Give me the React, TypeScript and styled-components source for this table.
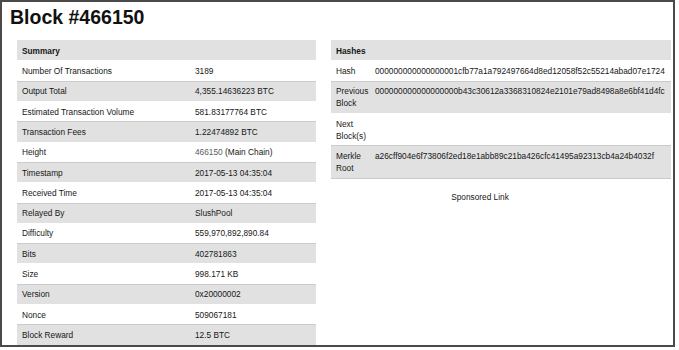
import React from 'react'
import styled, { createGlobalStyle } from 'styled-components'

const GlobalStyle = createGlobalStyle`
  body {
    margin: 0;
    background: #fff;
    font-family: "Liberation Sans", Arial, sans-serif;
    color: #161616;
  }
`

interface Pair {
  label: string
  value: React.ReactNode
}

const summary: Pair[] = [
  { label: 'Number Of Transactions', value: '3189' },
  { label: 'Output Total', value: '4,355.14636223 BTC' },
  { label: 'Estimated Transaction Volume', value: '581.83177764 BTC' },
  { label: 'Transaction Fees', value: '1.22474892 BTC' },
  { label: 'Height', value: null },
  { label: 'Timestamp', value: '2017-05-13 04:35:04' },
  { label: 'Received Time', value: '2017-05-13 04:35:04' },
  { label: 'Relayed By', value: 'SlushPool' },
  { label: 'Difficulty', value: '559,970,892,890.84' },
  { label: 'Bits', value: '402781863' },
  { label: 'Size', value: '998.171 KB' },
  { label: 'Version', value: '0x20000002' },
  { label: 'Nonce', value: '509067181' },
  { label: 'Block Reward', value: '12.5 BTC' },
]

const hashes: Pair[] = [
  { label: 'Hash', value: '000000000000000001cfb77a1a792497664d8ed12058f52c55214abad07e1724' },
  { label: 'Previous Block', value: '000000000000000000b43c30612a3368310824e2101e79ad8498a8e6bf41d4fc' },
  { label: 'Next Block(s)', value: '' },
  { label: 'Merkle Root', value: 'a26cff904e6f73806f2ed18e1abb89c21ba426cfc41495a92313cb4a24b4032f' },
]

const Frame = styled.div`
  width: 675px;
  height: 347px;
  box-sizing: border-box;
  border: 2px solid #4a4a4a;
  overflow: hidden;
  padding-top: 4px;
`
const Title = styled.h1`
  margin: 0 0 12px 8px;
  font-size: 19.5px;
  line-height: 22px;
  font-weight: 700;
  color: #111;
`
const Columns = styled.div`
  display: grid;
  grid-template-columns: 299px 340px;
  column-gap: 15px;
  padding-left: 15px;
  align-items: start;
`
const Table = styled.div`
  display: flex;
  flex-direction: column;
`
const Row = styled.div<{ $shade: boolean }>`
  display: flex;
  padding: 3.67px 0;
  line-height: 12px;
  font-size: 8.3px;
  background: ${p => (p.$shade ? '#e1e1e1' : '#fff')};
  border-top: 1px solid ${p => (p.$shade ? '#cbcbcb' : 'transparent')};
  border-bottom: 1px solid ${p => (p.$shade ? '#cbcbcb' : 'transparent')};
  margin-bottom: -1px;
  &:first-child {
    border-top: none;
    padding-top: 4.67px;
  }
`
const HeaderCell = styled.div`
  padding-left: 5px;
  font-weight: 700;
`
const Label = styled.div<{ $width: number }>`
  flex: none;
  width: ${p => p.$width}px;
  box-sizing: border-box;
  padding-left: 5px;
`
const Value = styled.div<{ $nowrap?: boolean }>`
  flex: 1;
  white-space: ${p => (p.$nowrap ? 'nowrap' : 'normal')};
`
const ChainLink = styled.span`
  color: #5c5c5c;
`
const Sponsor = styled.div`
  padding: 13px 42px 0 0;
  text-align: center;
  font-size: 8.3px;
  line-height: 12px;
`

export default function App() {
  return (
    <>
      <GlobalStyle />
      <Frame>
        <Title>Block #466150</Title>
        <Columns>
          <Table>
            <Row $shade>
              <HeaderCell>Summary</HeaderCell>
            </Row>
            {summary.map((row, i) => (
              <Row key={row.label} $shade={i % 2 === 1}>
                <Label $width={178}>{row.label}</Label>
                <Value>
                  {row.label === 'Height' ? (
                    <>
                      <ChainLink>466150</ChainLink> (Main Chain)
                    </>
                  ) : (
                    row.value
                  )}
                </Value>
              </Row>
            ))}
          </Table>
          <div>
            <Table>
              <Row $shade>
                <HeaderCell>Hashes</HeaderCell>
              </Row>
              {hashes.map((row, i) => (
                <Row key={row.label} $shade={i % 2 === 1}>
                  <Label $width={44}>{row.label}</Label>
                  <Value $nowrap>{row.value}</Value>
                </Row>
              ))}
            </Table>
            <Sponsor>Sponsored Link</Sponsor>
          </div>
        </Columns>
      </Frame>
    </>
  )
}
